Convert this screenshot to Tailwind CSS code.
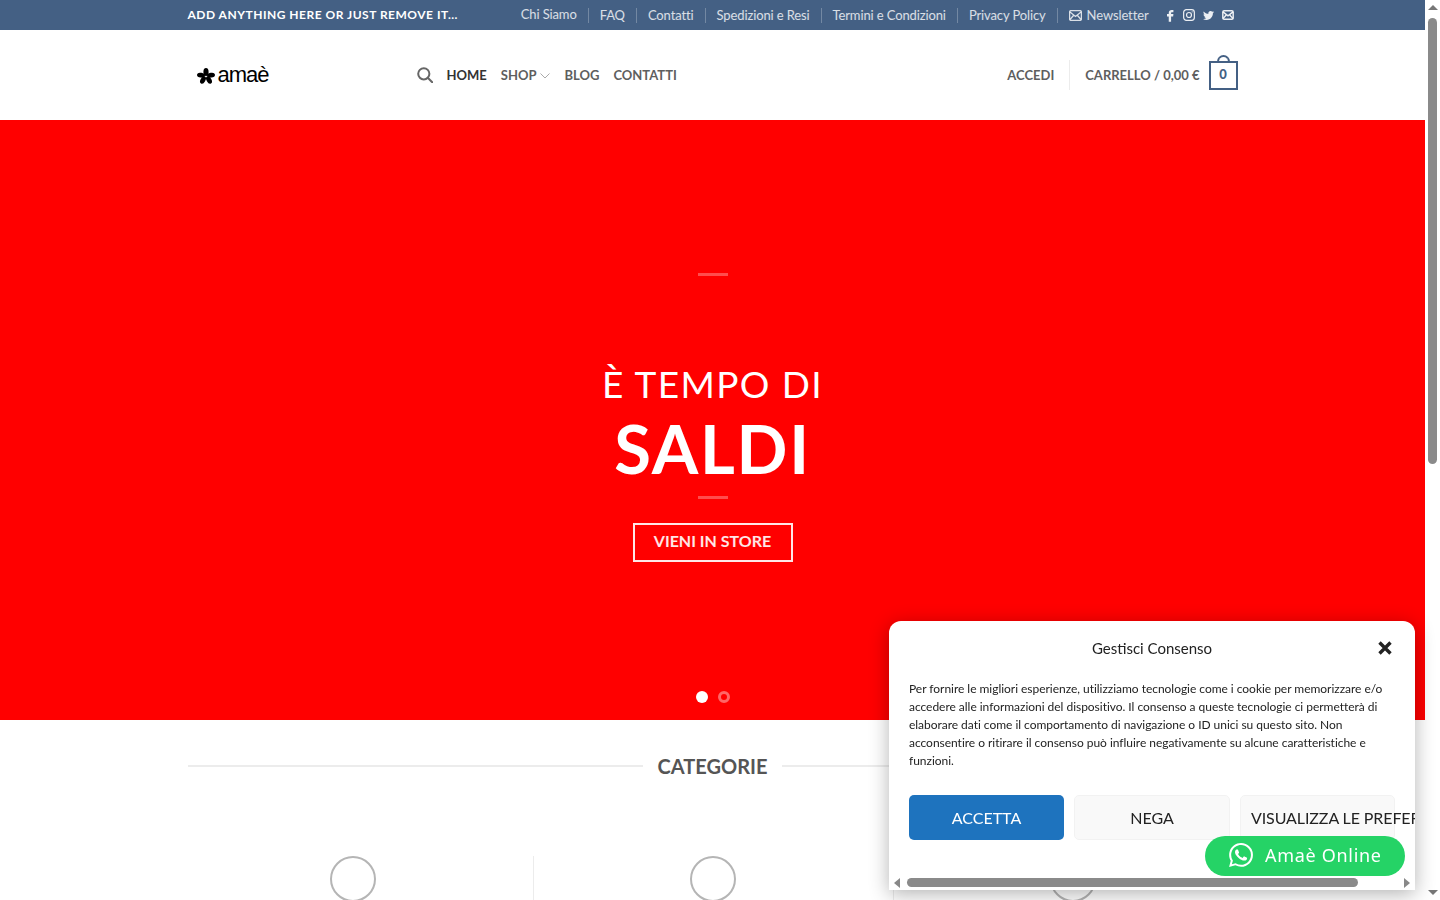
<!DOCTYPE html>
<html lang="it">
<head>
<meta charset="UTF-8">
<title>Amaè</title>
<script src="https://cdn.jsdelivr.net/npm/@tailwindcss/browser@4"></script>
</head>
<body class="h-screen overflow-hidden flex bg-white font-['Lato',sans-serif]">

<div class="w-[1425px] h-[900px] overflow-hidden shrink-0">
    <!-- Top bar -->
    <div class="h-[30px] bg-[#446084] text-white">
        <div class="w-[1050px] h-full mx-auto flex items-center justify-between">
            <span class="text-[12px] font-bold uppercase tracking-[0.5px]">Add anything here or just remove it...</span>
            <div class="flex items-center text-[13px] text-white/80 mr-[4px] tracking-[-0.12px]">
                <a class="pr-[11px]">Chi Siamo</a>
                <a class="px-[11px] border-l border-white/25 h-[15px] leading-[15px]">FAQ</a>
                <a class="px-[11px] border-l border-white/25 h-[15px] leading-[15px]">Contatti</a>
                <a class="px-[11px] border-l border-white/25 h-[15px] leading-[15px]">Spedizioni e Resi</a>
                <a class="px-[11px] border-l border-white/25 h-[15px] leading-[15px]">Termini e Condizioni</a>
                <a class="px-[11px] border-l border-white/25 h-[15px] leading-[15px]">Privacy Policy</a>
                <a class="pl-[11px] border-l border-white/25 h-[15px] leading-[15px] flex items-center gap-[5px]">
                    <svg class="w-[13px] h-[11px]" viewBox="0 0 13 11" fill="none" stroke="currentColor" stroke-width="1.3"><rect x="0.6" y="0.6" width="11.8" height="9.8" rx="1.5"/><path d="M1 2l5.5 4.5L12 2M1 9.5l3.5-4M12 9.5l-3.5-4"/></svg>
                    Newsletter
                </a>
                <div class="flex items-center ml-[18px] text-white/90">
                    <svg class="w-[7px] h-[13px]" viewBox="6 3 12 21" fill="currentColor"><path d="M14 8h3V4h-3c-2.8 0-5 2.2-5 5v2H6v4h3v9h4v-9h3.5l.5-4h-4V9c0-.6.4-1 1-1z"/></svg>
                    <svg class="ml-[9px] w-[12px] h-[12px]" viewBox="0 0 13 13" fill="none" stroke="currentColor" stroke-width="1.3"><rect x="0.7" y="0.7" width="11.6" height="11.6" rx="3"/><circle cx="6.5" cy="6.5" r="2.7"/><circle cx="9.9" cy="3.1" r="0.6" fill="currentColor" stroke="none"/></svg>
                    <svg class="ml-[8px] w-[11px] h-[11px]" viewBox="0 0 24 24" fill="currentColor"><path d="M23.953 4.57a10 10 0 01-2.825.775 4.958 4.958 0 002.163-2.723c-.951.555-2.005.959-3.127 1.184a4.92 4.92 0 00-8.384 4.482C7.69 8.095 4.067 6.13 1.64 3.162a4.822 4.822 0 00-.666 2.475c0 1.71.87 3.213 2.188 4.096a4.904 4.904 0 01-2.228-.616v.06a4.923 4.923 0 003.946 4.827 4.996 4.996 0 01-2.212.085 4.936 4.936 0 004.604 3.417 9.867 9.867 0 01-6.102 2.105c-.39 0-.779-.023-1.17-.067a13.995 13.995 0 007.557 2.209c9.053 0 13.998-7.496 13.998-13.985 0-.21 0-.42-.015-.63A9.935 9.935 0 0024 4.59z"/></svg>
                    <svg class="ml-[8px] w-[12px] h-[10px]" viewBox="0 0 13 11" fill="none" stroke="currentColor" stroke-width="1.6"><rect x="0.8" y="0.8" width="11.4" height="9.4" rx="1.5"/><path d="M1 2l5.5 4.5L12 2M1 9.5l3.5-4M12 9.5l-3.5-4"/></svg>
                </div>
            </div>
        </div>
    </div>

    <!-- Header -->
    <div class="h-[90px] bg-white">
        <div class="w-[1050px] h-full mx-auto flex items-center">
            <div class="w-[229px] flex items-center pl-[9px] gap-[3px] text-black">
                <svg class="w-[18px] h-[16px] mt-[2px]" viewBox="0 0 18 16" fill="#000"><ellipse cx="9" cy="4" rx="2.6" ry="4"/><ellipse cx="4" cy="7.2" rx="4" ry="2.4" transform="rotate(10 4 7.2)"/><ellipse cx="14" cy="7.2" rx="4" ry="2.4" transform="rotate(-10 14 7.2)"/><ellipse cx="6" cy="12" rx="2.4" ry="4" transform="rotate(30 6 12)"/><ellipse cx="12" cy="12" rx="2.4" ry="4" transform="rotate(-30 12 12)"/></svg>
                <span class="text-[22px] leading-none font-['Liberation_Sans',sans-serif] tracking-[-1px]">amaè</span>
            </div>
            <nav class="flex items-center gap-[14px] text-[13px] font-bold text-[#5e5e5e]">
                <svg class="w-[16px] h-[16px]" viewBox="0 0 16 16" fill="none" stroke="#666" stroke-width="2"><circle cx="6.8" cy="6.8" r="5.6"/><path d="M10.8 10.8L15.2 15.2" stroke-linecap="round"/></svg>
                <a class="text-[#333] pt-[2px]">HOME</a>
                <a class="flex items-center gap-[4px]"><span class="pt-[2px]">SHOP</span>
                    <svg class="w-[10px] h-[6px] mt-[1px]" viewBox="0 0 10 6" fill="none" stroke="#aaa"><path d="M0.5 0.5L5 5l4.5-4.5"/></svg>
                </a>
                <a class="pt-[2px]">BLOG</a>
                <a class="pt-[2px]">CONTATTI</a>
            </nav>
            <div class="ml-auto flex items-center text-[13px] font-bold text-[#5e5e5e]">
                <a class="pt-[2px]">ACCEDI</a>
                <span class="mx-[15px] w-px h-[30px] bg-[#ececec]"></span>
                <a class="pt-[2px]">CARRELLO / 0,00 €</a>
                <div class="relative ml-[9px] w-[29px] h-[29px] border-2 border-[#446084] flex items-center justify-center text-[13px] font-black text-[#446084] mt-[1px] pb-[2px]">
                    0
                    <span class="absolute left-[6px] -top-[8px] w-[13px] h-[7px] border-2 border-b-0 border-[#446084] rounded-t-full"></span>
                </div>
            </div>
        </div>
    </div>

    <!-- Hero -->
    <div class="relative h-[600px] bg-[#ff0000] flex flex-col items-center text-white pt-[153px]">
        <span class="w-[30px] h-[3px] bg-white/30"></span>
        <h2 class="mt-[84px] text-[37px] leading-[48px] tracking-[1.4px]">È TEMPO DI</h2>
        <h1 class="text-[67px] leading-[80px] font-bold tracking-[1.7px]">SALDI</h1>
        <span class="mt-[8px] w-[30px] h-[3px] bg-white/30"></span>
        <a class="mt-[24px] w-[160px] h-[39px] border-2 border-white/90 flex items-center justify-center text-[16px] font-bold text-white/90 pb-[3px]">VIENI IN STORE</a>
        <div class="absolute left-[696px] top-[571px] flex gap-[10px]">
            <span class="w-[12px] h-[12px] rounded-full bg-white"></span>
            <span class="w-[12px] h-[12px] rounded-full border-[3px] border-white/40"></span>
        </div>
    </div>

    <!-- Categorie -->
    <div class="w-[1050px] mx-auto mt-[31px] flex items-center">
        <span class="flex-1 h-[2px] bg-[#ececec]"></span>
        <h3 class="px-[15px] text-[20px] leading-[30px] font-bold text-[#555]">CATEGORIE</h3>
        <span class="flex-1 h-[2px] bg-[#ececec]"></span>
    </div>
    <div class="w-[1080px] mx-auto mt-[75px] grid grid-cols-3">
        <div class="h-[60px] flex justify-center"><span class="w-[46px] h-[46px] rounded-full border-2 border-[#b5b5b5]"></span></div>
        <div class="h-[60px] flex justify-center border-l border-[#ececec]"><span class="w-[46px] h-[46px] rounded-full border-2 border-[#b5b5b5]"></span></div>
        <div class="h-[60px] flex justify-center border-l border-[#ececec]"><span class="w-[46px] h-[46px] rounded-full border-2 border-[#b5b5b5]"></span></div>
    </div>
</div>

<!-- Page scrollbar -->
<div class="w-[15px] h-[900px] bg-white flex flex-col items-center relative">
    <span class="mt-[5px] w-0 h-0 border-x-[5px] border-x-transparent border-b-[5px] border-b-[#777]"></span>
    <span class="mt-[8px] w-[9px] h-[446px] rounded-full bg-[#8a8a8a]"></span>
    <span class="mt-auto mb-[5px] w-0 h-0 border-x-[5px] border-x-transparent border-t-[5px] border-t-[#777]"></span>
</div>

<!-- Cookie consent -->
<div class="fixed left-[889px] top-[621px] w-[526px] h-[269px] bg-white rounded-t-xl shadow-[0_4px_20px_rgba(0,0,0,0.3)] overflow-hidden text-[#222]">
    <div class="relative h-[54px] flex items-center justify-center text-[15px]">
        Gestisci Consenso
        <svg class="absolute left-[489px] top-[20px] w-[14px] h-[14px]" viewBox="0 0 14 14" stroke="#222" stroke-width="3.4"><path d="M1.5 1.5l11 11M12.5 1.5l-11 11"/></svg>
    </div>
    <p class="px-[20px] mt-[5px] text-[12px] leading-[18px] tracking-[-0.03px]">Per fornire le migliori esperienze, utilizziamo tecnologie come i cookie per memorizzare e/o accedere alle informazioni del dispositivo. Il consenso a queste tecnologie ci permetterà di elaborare dati come il comportamento di navigazione o ID unici su questo sito. Non acconsentire o ritirare il consenso può influire negativamente su alcune caratteristiche e funzioni.</p>
    <div class="mt-[25px] pl-[20px] flex gap-[10px] text-[16px]">
        <button class="w-[155px] h-[45px] rounded-[5px] bg-[#1e73be] text-white shrink-0">ACCETTA</button>
        <button class="w-[156px] h-[45px] rounded-[5px] bg-[#f9f9f9] border border-[#f2f2f2] text-[#222] shrink-0">NEGA</button>
        <button class="w-[155px] h-[45px] rounded-[5px] bg-[#f9f9f9] border border-[#f2f2f2] text-[#222] shrink-0 pl-[10px] text-left whitespace-nowrap tracking-[-0.1px]">VISUALIZZA LE PREFERENZE</button>
    </div>
    <!-- inner scrollbar -->
    <div class="absolute left-0 right-0 bottom-0 h-[15px] flex items-center bg-white">
        <span class="ml-[5px] w-0 h-0 border-y-[5px] border-y-transparent border-r-[6px] border-r-[#888]"></span>
        <span class="ml-[7px] w-[451px] h-[9px] rounded-full bg-[#8a8a8a]"></span>
        <span class="ml-auto mr-[5px] w-0 h-0 border-y-[5px] border-y-transparent border-l-[6px] border-l-[#888]"></span>
    </div>
</div>

<!-- WhatsApp -->
<a class="fixed left-[1205px] top-[836px] w-[200px] h-[40px] rounded-full bg-[#25d366] text-white flex items-center pl-[24px] gap-[12px] font-['Noto_Sans',sans-serif] text-[18px] tracking-[0.7px] whitespace-nowrap pb-[2px]">
    <svg class="w-[24px] h-[24px]" viewBox="0 0 24 24" fill="currentColor"><path d="M17.472 14.382c-.297-.149-1.758-.867-2.03-.967-.273-.099-.471-.148-.67.15-.197.297-.767.966-.94 1.164-.173.199-.347.223-.644.075-.297-.15-1.255-.463-2.39-1.475-.883-.788-1.48-1.761-1.653-2.059-.173-.297-.018-.458.13-.606.134-.133.298-.347.446-.52.149-.174.198-.298.298-.497.099-.198.05-.371-.025-.52-.075-.149-.669-1.612-.916-2.207-.242-.579-.487-.5-.669-.51-.173-.008-.371-.01-.57-.01-.198 0-.52.074-.792.372-.272.297-1.04 1.016-1.04 2.479 0 1.462 1.065 2.875 1.213 3.074.149.198 2.096 3.2 5.077 4.487.709.306 1.262.489 1.694.625.712.227 1.36.195 1.871.118.571-.085 1.758-.719 2.006-1.413.248-.694.248-1.289.173-1.413-.074-.124-.272-.198-.57-.347m-5.421 7.403h-.004a9.87 9.87 0 01-5.031-1.378l-.361-.214-3.741.982.998-3.648-.235-.374a9.86 9.86 0 01-1.51-5.26c.001-5.45 4.436-9.884 9.888-9.884 2.64 0 5.122 1.03 6.988 2.898a9.825 9.825 0 012.893 6.994c-.003 5.45-4.437 9.884-9.885 9.884m8.413-18.297A11.815 11.815 0 0012.05 0C5.495 0 .16 5.335.157 11.892c0 2.096.547 4.142 1.588 5.945L.057 24l6.305-1.654a11.882 11.882 0 005.683 1.448h.005c6.554 0 11.89-5.335 11.893-11.893a11.821 11.821 0 00-3.48-8.413Z"/></svg>
    Amaè Online
</a>
</body>
</html>
